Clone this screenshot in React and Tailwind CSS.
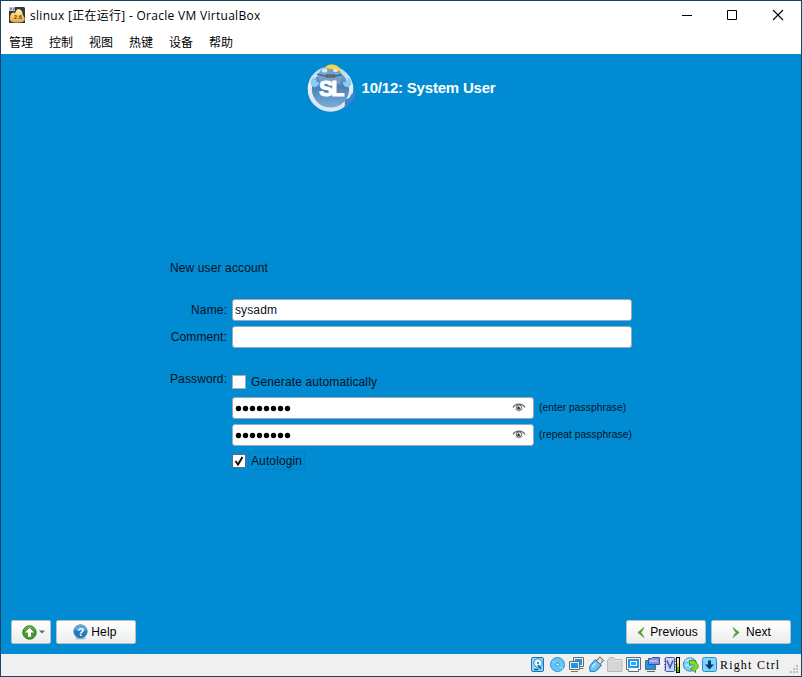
import React from 'react';

const MENUS = ['管理', '控制', '视图', '热键', '设备', '帮助'];

function AppIcon() {
  return (
    <svg width="16" height="17" viewBox="0 0 16 17" className="-mt-px shrink-0">
      <defs>
        <linearGradient id="tux" x1="0" y1="0" x2="0" y2="1">
          <stop offset="0" stopColor="#fff3a8" />
          <stop offset="0.5" stopColor="#fbd066" />
          <stop offset="1" stopColor="#e8a548" />
        </linearGradient>
      </defs>
      <path d="M0 0h15l1 1v15H0V1z" fill="#303742" />
      <path d="M0 0h6v4H0z" fill="#c3c7cd" />
      <path d="M1 2h2M4 2h2" stroke="#59616d" />
      <path d="M1 12C1 8 2 6 4 5.500c1 0 1.500.500 2 1C7 3 8 2 10 2c2 1 3.500 2 3.500 5l2 4c1 3-1 4.500-7.500 4.500-5 0-7-1-7-3.500z" fill="url(#tux)" />
      <text x="4.8" y="11.6" fontSize="6" fontWeight="bold" fontFamily="Liberation Sans, sans-serif" fill="#70401c">2.6</text>
    </svg>
  );
}

function WindowControls() {
  return (
    <div className="-mr-px ml-auto flex h-full items-start">
      <svg width="46" height="28" viewBox="0 0 46 28" fill="none" stroke="#000"><path d="M18 14.5h10" /></svg>
      <svg width="46" height="28" viewBox="0 0 46 28" fill="none" stroke="#000"><path d="M17.5 9.5h9v9h-9z" /></svg>
      <svg width="46" height="28" viewBox="0 0 46 28" fill="none" stroke="#000" strokeWidth="1.1"><path d="M17 9l10 10M27 9l-10 10" /></svg>
    </div>
  );
}

function Logo() {
  return (
    <svg width="50" height="50" viewBox="0 0 50 50" className="shrink-0">
      <defs>
        <linearGradient id="disc" x1="0" y1="0" x2="0" y2="1">
          <stop offset="0" stopColor="#83afd5" />
          <stop offset="0.45" stopColor="#4780b8" />
          <stop offset="1" stopColor="#82b2dc" />
        </linearGradient>
        <linearGradient id="ring" x1="0" y1="0" x2="0" y2="1">
          <stop offset="0" stopColor="#b9d9ee" />
          <stop offset="0.4" stopColor="#e9eff5" />
          <stop offset="1" stopColor="#dce5ee" />
        </linearGradient>
      </defs>
      <circle cx="23.5" cy="26" r="20.7" fill="url(#disc)" stroke="url(#ring)" strokeWidth="4.200" />
      <path d="M11 12c2-6 7-9 12-9 7 0 11 5 12 10l-2 8H14z" fill="#6fa2cd" />
      <path d="M18 5.500c1-3 3-4 6-4 3-.5 6 .5 8 3 2 1 3 3 3 5-4-3-11-4-17-4z" fill="#f4d544" />
      <ellipse cx="17.500" cy="7.5" rx="2.800" ry="2" fill="#dfe9ea" />
      <ellipse cx="28.500" cy="7.5" rx="2.500" ry="1.800" fill="#dfe9ea" />
      <path d="M10 11c8 3 17 3 25 0.500" fill="none" stroke="#3d5468" strokeWidth="1.200" />
      <path d="M19 11.500h9v3h-9z" fill="#5b4b50" />
      <path d="M20 13h7" stroke="#9a8b90" strokeWidth=".7" />
      <path d="M4 22c-1-4 1-7 3-8l0 3 3-1-1 3 3 0c0 5-5 7-8 3zM44 22c1-4-1-7-3-8l0 3-3-1 1 3-3 0c0 5 5 7 8 3z" fill="#8ecbf3" />
      <path d="M37 45c2-4 0-6 1-8 2-2 4-1 5-3 1-3 3-5 6-5-1 2-1 5-2 7s-3 2-4 4-2 4-6 5z" fill="#3b86c6" />
      <g fontFamily="Liberation Sans, Arial, sans-serif" fontWeight="bold" fontSize="21.500" fill="#fff" stroke="#fff" strokeWidth="1.100" strokeLinejoin="round">
        <text x="12" y="33" letterSpacing="-2.200">SL</text>
      </g>
    </svg>
  );
}

function Eye() {
  return (
    <svg width="14" height="9" viewBox="0 0 14 9" fill="none" className="mb-px shrink-0">
      <path d="M1 4.500C3.500 0 10.500 0 13 4.500" stroke="#666" strokeWidth="1.200" />
      <path d="M3 6c2 2.500 6 2.500 8 0" stroke="#aaa" strokeWidth=".8" />
      <circle cx="7" cy="4.500" r="2.700" stroke="#555" strokeWidth="1" />
      <circle cx="6.800" cy="4.700" r="1.500" fill="#333" />
      <circle cx="7.800" cy="3.800" r=".7" fill="#fff" />
    </svg>
  );
}

const FIELD = 'flex h-[22px] items-center rounded-[3px] border border-[#9aa9b5] bg-white px-[2px]';

function Password({ hint }) {
  return (
    <div className="flex items-center">
      <div className={FIELD + ' w-[302px] shrink-0 justify-between pr-[7px]'}>
        <svg width="58" height="8" viewBox="0 0 58 8" aria-label="password">
          {Array.from({ length: 8 }, (_, i) => (
            <circle key={i} cx={3.5 + i * 7} cy="4.500" r="2.700" />
          ))}
        </svg>
        <Eye />
      </div>
      <span className="ml-[5px] text-[10.25px] tracking-[0.06px] whitespace-nowrap text-[#04131d]">{hint}</span>
    </div>
  );
}

const BUTTON = 'flex h-[24px] items-center rounded-[2px] border border-[#b4bfc7] bg-linear-to-b from-white to-[#eceded] text-[12px] text-black';

function Chevron({ flip }) {
  return (
    <svg width="10" height="13" viewBox="0 0 10 13" className={flip ? 'mt-px shrink-0 -scale-x-100' : 'mt-px shrink-0'}>
      <path d="M8 1.500L1.800 6.500 8 11.500 6.500 8.500 5 6.500 6.500 4.500z" fill="#4e9b37" stroke="#62a74a" strokeWidth=".8" strokeLinejoin="round" />
    </svg>
  );
}

function StatusIcons() {
  return (
    <svg width="188" height="20" viewBox="530 655 188 20" fill="none" className="shrink-0">
      <rect x="531.5" y="657.5" width="12" height="14" rx="1.500" fill="#8fd8ff" stroke="#1c72b5" />
      <circle cx="538" cy="663" r="4.200" fill="#e8f7ff" stroke="#2b82c2" />
      <circle cx="538" cy="663" r="1" fill="#1769a8" />
      <path d="M534 669.500h4.500M538 665l3 4" stroke="#155b93" strokeWidth="1.500" />
      <circle cx="557.5" cy="664.500" r="7" fill="#5ec6fb" stroke="#3c8ec4" />
      <path d="M552.500 661l4 3M559 666l4 3" stroke="#8bd7ff" strokeWidth="1.500" />
      <circle cx="557.5" cy="664.500" r="1.600" fill="#f7fcff" stroke="#3388bf" />
      <path d="M573.500 657.500h10v9h-10z" fill="#eee" stroke="#6a6a6a" />
      <path d="M575 659h7v6h-7z" fill="#1598ea" />
      <path d="M579 668.500h4.500" stroke="#777" />
      <path d="M569.500 661.500h10v8h-10z" fill="#eee" stroke="#6a6a6a" />
      <path d="M571 663h7v5h-7z" fill="#1598ea" />
      <path d="M571 671.500h7" stroke="#777" />
      <g transform="rotate(43 596 665)">
        <path d="M592 661.500h8v6c0 3-2 5-4 6-2-1-4-3-4-6z" fill="#6cc8fc" stroke="#287eb8" />
        <path d="M593.500 656.500h5v5h-5z" fill="#f1f1f1" stroke="#777" />
        <path d="M595 658.500h.8M597 658.500h.8" stroke="#666" />
        <path d="M594.500 664v5" stroke="#c9eeff" strokeWidth="1.500" />
      </g>
      <path d="M607.5 660.500l2-3h4l2 2h6.500v12h-14.500z" fill="#d6d6d6" stroke="#bababa" />
      <path d="M608.500 661.500h6l2-1h5" stroke="#e2e2e2" />
      <path d="M626.5 657.5h14v12h-2v2h-10v-2h-2z" fill="#f4f4f4" stroke="#6a6a6a" />
      <path d="M628 659h11v9h-11z" fill="#1d9cef" />
      <path d="M630.5 661.5h6v4h-6z" fill="#35a8f2" stroke="#fff" />
      <path d="M645.5 660.5h10v9h-10z" fill="#1299ec" stroke="#666" />
      <path d="M647 671.5h8" stroke="#666" />
      <path d="M648.500 658.5h3l1-1h7v7h-11z" fill="#7c91dc" stroke="#3c50a4" />
      <path d="M649.500 660h8v2h-8z" fill="#a9bbf5" />
      <path d="M664 659h12M664 661.500h12M664 664.500h12M664 667h12M664 670h12" stroke="#61699c" />
      <rect x="665.5" y="657.5" width="9" height="14" rx="1" fill="#c7d5ff" stroke="#4a569e" />
      <path d="M667 660.500l3 7 3-7" stroke="#4c57a0" strokeWidth="1.600" />
      <path d="M676 657h4v16h-4z" fill="#000" />
      <path d="M677 658h2v5h-2z" fill="#e8e8e8" />
      <path d="M677 663h2v4h-2z" fill="#ffe000" />
      <path d="M677 667h2v5h-2z" fill="#36c900" />
      <circle cx="690" cy="664.500" r="6.700" fill="#78cef7" stroke="#318abe" />
      <path d="M685 661l6-2M685 666c3-2 4-1 6 2" stroke="#bdeaff" strokeWidth="1.500" />
      <path d="M689.500 660.500h6v2c4 2 3 6 0 7.500v2.500l-5-4 3-1c2-1 1-3-1-3l-3 1z" fill="#8dd82f" stroke="#3f9a22" strokeLinejoin="round" />
      <rect x="702.5" y="657.5" width="14" height="14" rx="2" fill="#7fd3ff" stroke="#2b8ec7" />
      <path d="M708 660.500h3v4h3l-4.500 5-4.500-5h3z" fill="#063d6a" />
    </svg>
  );
}

export default function App() {
  return (
    <div className="flex h-[677px] w-[802px] flex-col overflow-hidden border border-[#164568] bg-white font-['Liberation_Sans','Noto_Sans_CJK_SC',sans-serif] text-[12px]">
      <header className="flex h-[29px] shrink-0 items-center pl-[8px] text-black">
        <AppIcon />
        <h1 className="ml-[5px] font-['Open_Sans','Noto_Sans_CJK_SC',sans-serif] text-[12px] leading-[20px] tracking-[0.29px] whitespace-nowrap">slinux [正在运行] - Oracle VM VirtualBox</h1>
        <WindowControls />
      </header>
      <nav className="flex h-[24px] shrink-0 items-center gap-[16px] pl-[8px] font-['Noto_Sans_CJK_SC',sans-serif] text-[12px] leading-[16px] text-black">
        {MENUS.map((m) => <span key={m}>{m}</span>)}
      </nav>

      <main className="flex h-[600px] shrink-0 flex-col bg-[#008bd3] text-[#04131d]">
        <div className="mt-[9px] flex h-[50px] items-center justify-center gap-[5px]">
          <Logo />
          <h2 className="text-[15px] font-bold leading-[18px] tracking-[-0.2px] whitespace-nowrap text-white">10/12: System User</h2>
        </div>

        <section className="mt-[148px] ml-[169px] w-[470px] leading-[14px] tracking-[0.12px]">
          <p>New user account</p>
          <div className="mt-[24px] grid grid-cols-[57px_400px] gap-x-[5px] gap-y-[5px]">
            <label className="self-center text-right">Name:</label>
            <div className={FIELD}>sysadm</div>
            <label className="self-center text-right">Comment:</label>
            <div className={FIELD} />
          </div>
          <div className="mt-[24px] grid grid-cols-[57px_400px] gap-x-[5px]">
            <span className="text-right">Password:</span>
            <div className="flex flex-col">
              <div className="mt-[3px] flex h-[14px] items-center gap-[5px]">
                <span className="h-[14px] w-[14px] border border-[#a4adb5] bg-white" />
                <span>Generate automatically</span>
              </div>
              <div className="mt-[8px] flex flex-col gap-[5px]">
                <Password hint="(enter passphrase)" />
                <Password hint="(repeat passphrase)" />
              </div>
              <div className="mt-[6px] flex h-[18px] items-center gap-[2px]">
                <span className="flex h-[14px] w-[14px] items-center justify-center border border-[#557085] bg-white">
                  <svg width="10" height="10" viewBox="0 0 10 10" fill="none"><path d="M1.500 5l2.500 3.500L8.500 1" stroke="#111" strokeWidth="2" /></svg>
                </span>
                <span className="flex h-[18px] items-center border border-dotted border-[#0a75b0] px-[2px]">Autologin</span>
              </div>
            </div>
          </div>
        </section>

        <footer className="mt-auto mb-[10px] flex gap-[5px] px-[10px]">
          <button className={BUTTON + ' w-[40px] justify-center gap-[2px] pl-[5px]'}>
            <svg width="15" height="15" viewBox="0 0 15 15">
              <circle cx="7.500" cy="7.500" r="6.700" fill="#4a9932" stroke="#347b22" />
              <path d="M2 5a6 5 0 0 1 11 0" fill="none" stroke="#7bbb64" />
              <path d="M7.500 2.800L3 7.500h3v4.300h3V7.500h3z" fill="#fff" />
            </svg>
            <svg width="6" height="4" viewBox="0 0 6 4"><path d="M0 .500h6L3 3.500z" fill="#666" /></svg>
          </button>
          <button className={BUTTON + ' w-[80px] justify-center gap-[3px] pr-[2px]'}>
            <svg width="15" height="16" viewBox="0 0 15 16" className="shrink-0">
              <ellipse cx="7.500" cy="14.500" rx="5.500" ry="1" fill="#bcc3c8" />
              <circle cx="7.500" cy="7.500" r="6.800" fill="#2676b9" stroke="#4d99ce" strokeWidth=".7" />
              <path d="M1.500 6a6 5.500 0 0 1 12 0c-4 2-8 1-12 0z" fill="#5ba7da" />
              <text x="4.400" y="11.500" fontSize="11" fontWeight="bold" fontFamily="Liberation Sans, sans-serif" fill="#fff">?</text>
            </svg>
            <span className="tracking-[0.2px]">Help</span>
          </button>
          <button className={BUTTON + ' ml-auto w-[80px] justify-center gap-[4px] pl-[2px]'}><Chevron /><span className="tracking-[0.12px]">Previous</span></button>
          <button className={BUTTON + ' w-[80px] justify-center gap-[5px]'}><Chevron flip /><span className="tracking-[0.12px]">Next</span></button>
        </footer>
      </main>

      <footer className="flex h-[22px] shrink-0 items-center justify-end bg-[#f0f0f0]">
        <StatusIcons />
        <span className="ml-[2px] w-[61px] font-['Liberation_Serif',serif] text-[12px] leading-[14px] tracking-[1.15px] whitespace-nowrap text-black [word-spacing:0.500px]">Right Ctrl</span>
        <svg width="20" height="20" viewBox="0 0 20 20" className="shrink-0">
          <path d="M16 9h2v2h-2zM13 12h2v2h-2zM16 12h2v2h-2zM10 15h2v2h-2zM13 15h2v2h-2zM16 15h2v2h-2z" transform="translate(-1 1)" fill="#bdbdbd" />
        </svg>
      </footer>
    </div>
  );
}
